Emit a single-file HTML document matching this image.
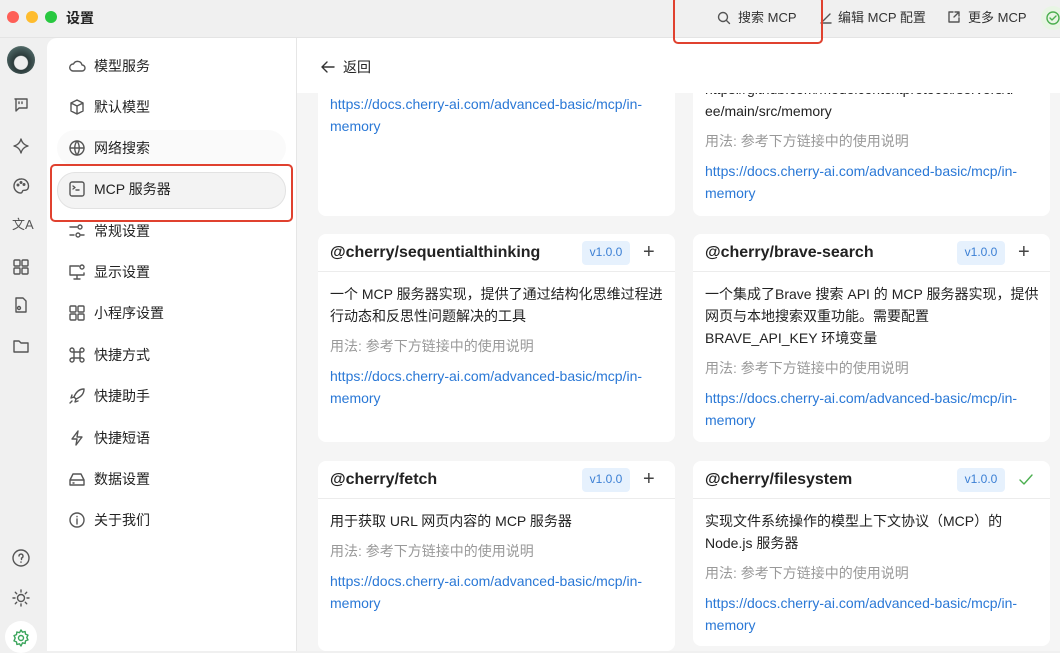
<!DOCTYPE html>
<html><head><meta charset="utf-8"><style>
*{box-sizing:border-box;margin:0;padding:0}
body{width:1060px;height:651px;overflow:hidden;background:#f0f0f0;font-family:"Liberation Sans","Noto Sans CJK SC",sans-serif;color:#222;position:relative;font-size:14px}
.abs{position:absolute}
.dot{position:absolute;top:11px;width:12px;height:12px;border-radius:50%}
svg{position:absolute;fill:none;stroke:#555;stroke-width:1.4;stroke-linecap:round;stroke-linejoin:round}
.side{position:absolute;left:47px;top:38px;width:250px;height:613px;background:#fff;border-top-left-radius:10px;border-right:1px solid #e6e6e6}
.item{position:absolute;left:94px;font-size:14px;line-height:20px;color:#222}
.main{position:absolute;left:297px;top:38px;width:763px;height:613px;background:#f5f5f5}
.hdr{position:absolute;left:297px;top:38px;width:763px;height:55px;background:#fff}
.card{position:absolute;background:#fff;border-radius:8px;width:357px;overflow:hidden}
.ch{height:38px;border-bottom:1px solid #ececec;position:relative}
.ct{position:absolute;left:12px;top:8px;font-size:16px;font-weight:bold;color:#222;line-height:22px}
.ver{position:absolute;left:264px;top:7px;width:48px;height:24px;background:#e6f1fd;border-radius:4px;color:#3b7fd4;font-size:12px;text-align:center;line-height:22px}
.act{position:absolute;left:325px;top:6px;font-size:20px;color:#444;line-height:24px}
.cb{padding:11px 8px 0 12px;line-height:22px;font-size:14px}
.u{color:#999;margin-top:8px}
.l{color:#2a78d6;margin-top:8px}
.red{position:absolute;border:2px solid #e0412f;border-radius:5px}
.tb{position:absolute;top:9px;font-size:13px;color:#333;line-height:18px}
</style></head><body>
<div class="dot" style="left:7px;background:#fe5f57"></div>
<div class="dot" style="left:26px;background:#febc2e"></div>
<div class="dot" style="left:45px;background:#28c840"></div>
<div class="abs" style="left:66px;top:8px;font-weight:bold;font-size:14px;line-height:20px">设置</div>

<div class="tb" style="left:738px">搜索 MCP</div>
<svg style="left:717px;top:11px" width="14" height="14"><circle cx="6" cy="6" r="4.5"/><path d="M9.5 9.5l3 3"/></svg>
<div class="tb" style="left:838px">编辑 MCP 配置</div>
<svg style="left:819px;top:11px" width="14" height="14"><path d="M2 12h10M4 10l7-7"/></svg>
<div class="tb" style="left:968px">更多 MCP</div>
<svg style="left:947px;top:10px" width="14" height="14"><path d="M6 2H2v10h10V8M8 2h4v4M12 2L7 7"/></svg>
<div class="abs" style="left:1041px;top:6px;width:24px;height:24px;border-radius:50%;background:#e8f5e4"></div>
<svg style="left:1045px;top:10px;stroke:#4caf50" width="16" height="16"><circle cx="8" cy="8" r="6"/><path d="M5 8l2 2 4-4"/></svg>

<div class="abs" style="left:7px;top:46px;width:28px;height:28px;border-radius:50%;background:radial-gradient(circle at 50% 60%,#eee 30%,#2b3a3a 34%,#4a6160 70%,#b5c8b5 100%)"></div>
<svg style="left:13px;top:97px" width="16" height="16"><path d="M2 2h12v9H6l-3 3V2z"/><path d="M6 5v1.5M9 5v1.5"/></svg>
<svg style="left:12px;top:137px" width="18" height="18"><path d="M9 2c1 4 3 6 7 7-4 1-6 3-7 7-1-4-3-6-7-7 4-1 6-3 7-7z"/></svg>
<svg style="left:12px;top:177px" width="18" height="18"><path d="M9 2a7 7 0 1 0 0 14c1.5 0 1-2 2-2.5s4 .5 5-2A7 7 0 0 0 9 2z"/><circle cx="6" cy="8" r=".8"/><circle cx="9" cy="5.5" r=".8"/><circle cx="12" cy="7.5" r=".8"/></svg>
<div class="abs" style="left:12px;top:214px;font-size:13px;color:#555">文A</div>
<svg style="left:12px;top:258px" width="18" height="18"><rect x="2" y="2" width="6" height="6" rx="1"/><rect x="10" y="2" width="6" height="6" rx="1"/><rect x="2" y="10" width="6" height="6" rx="1"/><rect x="10" y="10" width="6" height="6" rx="1"/></svg>
<svg style="left:12px;top:296px" width="18" height="18"><path d="M4 2h7l3 3v11H4z"/><circle cx="7" cy="12" r="1.5"/></svg>
<svg style="left:12px;top:337px" width="18" height="18"><path d="M2 4h5l2 2h7v9H2z"/></svg>
<svg style="left:11px;top:548px" width="20" height="20"><circle cx="10" cy="10" r="8"/><path d="M8 8a2 2 0 1 1 2.5 2v1.5M10 14v.3"/></svg>
<svg style="left:11px;top:588px" width="20" height="20"><circle cx="10" cy="10" r="3.5"/><path d="M10 2v2M10 16v2M2 10h2M16 10h2M4.3 4.3l1.4 1.4M14.3 14.3l1.4 1.4M4.3 15.7l1.4-1.4M14.3 5.7l1.4-1.4"/></svg>
<div class="abs" style="left:5px;top:621px;width:32px;height:32px;border-radius:50%;background:#fff"></div>
<svg style="left:11px;top:628px;stroke:#3aa45b" width="20" height="20"><circle cx="10" cy="10" r="2.5"/><path d="M10 2l1.5 2.2 2.6-.7.4 2.6 2.5 1-1.2 2.4 1.2 2.4-2.5 1-.4 2.6-2.6-.7L10 18l-1.5-2.2-2.6.7-.4-2.6-2.5-1L4.2 10 3 7.6l2.5-1 .4-2.6 2.6.7z"/></svg>

<div class="side"></div>
<div class="abs" style="left:57px;top:130px;width:229px;height:36px;border-radius:18px;background:#fafafa"></div>
<div class="abs" style="left:57px;top:172px;width:229px;height:37px;border-radius:18px;background:#f3f3f3;border:1px solid #e2e2e2"></div>
<div class="red" style="left:50px;top:164px;width:243px;height:58px"></div>
<svg style="left:68px;top:58px" width="18" height="16"><path d="M5 13h9a3 3 0 0 0 0-6 4.5 4.5 0 0 0-8.5-1A3.5 3.5 0 0 0 5 13z"/></svg>
<svg style="left:68px;top:98px" width="18" height="18"><path d="M9 2l6 3v8l-6 3-6-3V5zM3 5l6 3 6-3M9 8v8"/></svg>
<svg style="left:68px;top:139px" width="18" height="18"><circle cx="9" cy="9" r="7"/><path d="M2 9h14M9 2c-3 4-3 10 0 14M9 2c3 4 3 10 0 14"/></svg>
<svg style="left:68px;top:180px" width="18" height="18"><rect x="2" y="2" width="14" height="14" rx="2"/><path d="M5 6l2 1.5L5 9M8 10h3"/></svg>
<svg style="left:68px;top:222px" width="18" height="18"><path d="M2 5h7M2 13h4M13 13h3"/><circle cx="12" cy="5" r="2"/><circle cx="10" cy="13" r="2"/></svg>
<svg style="left:68px;top:263px" width="18" height="18"><path d="M11 3H2v9h14v-2M9 12v4M6 16h6"/><circle cx="14" cy="4" r="2"/></svg>
<svg style="left:68px;top:304px" width="18" height="18"><rect x="2" y="2" width="6" height="6" rx="1"/><rect x="10" y="2" width="6" height="6" rx="1"/><rect x="2" y="10" width="6" height="6" rx="1"/><rect x="10" y="10" width="6" height="6" rx="1"/></svg>
<svg style="left:68px;top:346px" width="18" height="18"><path d="M6 6h6v6H6zM6 6H4a2 2 0 1 1 2-2zM12 6V4a2 2 0 1 1 2 2zM12 12h2a2 2 0 1 1-2 2zM6 12v2a2 2 0 1 1-2-2z"/></svg>
<svg style="left:68px;top:387px" width="18" height="18"><path d="M16 2c-5 0-8 3-10 8l2 2c5-2 8-5 8-10zM6 10l-3 1 1-3M8 12l-1 3 3-1M4 14l-2 2"/></svg>
<svg style="left:68px;top:429px" width="18" height="18"><path d="M10 2L4 10h5l-1 6 6-8H9z"/></svg>
<svg style="left:68px;top:470px" width="18" height="18"><path d="M2 10l3-6h8l3 6v5H2zM2 10h14M5 13h1"/></svg>
<svg style="left:68px;top:511px" width="18" height="18"><circle cx="9" cy="9" r="7"/><path d="M9 8v5M9 5.5v.3"/></svg>
<div class="item" style="top:56px">模型服务</div>
<div class="item" style="top:97px">默认模型</div>
<div class="item" style="top:138px">网络搜索</div>
<div class="item" style="top:179px">MCP 服务器</div>
<div class="item" style="top:221px">常规设置</div>
<div class="item" style="top:262px">显示设置</div>
<div class="item" style="top:303px">小程序设置</div>
<div class="item" style="top:345px">快捷方式</div>
<div class="item" style="top:386px">快捷助手</div>
<div class="item" style="top:428px">快捷短语</div>
<div class="item" style="top:469px">数据设置</div>
<div class="item" style="top:510px">关于我们</div>

<div class="main"></div>
<div class="card" style="left:318px;top:60px;height:156px"><div class="cb" style="padding-top:33px"><div class="l" style="margin-top:0">https://docs.cherry-ai.com/advanced-basic/mcp/in-memory</div></div></div>
<div class="card" style="left:693px;top:60px;height:156px"><div class="cb" style="padding-top:18px">https://github.com/modelcontextprotocol/servers/tr<br>ee/main/src/memory<div class="u">用法: 参考下方链接中的使用说明</div><div class="l">https://docs.cherry-ai.com/advanced-basic/mcp/in-memory</div></div></div>

<div class="card" style="left:318px;top:234px;height:208px"><div class="ch"><div class="ct">@cherry/sequentialthinking</div><div class="ver">v1.0.0</div><div class="act">+</div></div><div class="cb">一个 MCP 服务器实现，提供了通过结构化思维过程进行动态和反思性问题解决的工具<div class="u">用法: 参考下方链接中的使用说明</div><div class="l">https://docs.cherry-ai.com/advanced-basic/mcp/in-memory</div></div></div>
<div class="card" style="left:693px;top:234px;height:208px"><div class="ch"><div class="ct">@cherry/brave-search</div><div class="ver">v1.0.0</div><div class="act">+</div></div><div class="cb">一个集成了Brave 搜索 API 的 MCP 服务器实现，提供<br>网页与本地搜索双重功能。需要配置<br>BRAVE_API_KEY 环境变量<div class="u">用法: 参考下方链接中的使用说明</div><div class="l">https://docs.cherry-ai.com/advanced-basic/mcp/in-memory</div></div></div>

<div class="card" style="left:318px;top:461px;height:190px"><div class="ch"><div class="ct">@cherry/fetch</div><div class="ver">v1.0.0</div><div class="act">+</div></div><div class="cb">用于获取 URL 网页内容的 MCP 服务器<div class="u">用法: 参考下方链接中的使用说明</div><div class="l">https://docs.cherry-ai.com/advanced-basic/mcp/in-memory</div></div></div>
<div class="card" style="left:693px;top:461px;height:185px"><div class="ch"><div class="ct">@cherry/filesystem</div><div class="ver">v1.0.0</div><svg style="left:326px;top:12px;stroke:#4caf50" width="14" height="14"><path d="M1 7l4 4 8-9"/></svg></div><div class="cb">实现文件系统操作的模型上下文协议（MCP）的<br>Node.js 服务器<div class="u">用法: 参考下方链接中的使用说明</div><div class="l">https://docs.cherry-ai.com/advanced-basic/mcp/in-memory</div></div></div>

<div class="hdr"></div>
<svg style="left:320px;top:59px;stroke:#333" width="16" height="16"><path d="M14 8H2M7 3L2 8l5 5"/></svg>
<div class="abs" style="left:343px;top:57px;font-size:14px;line-height:20px">返回</div>

<div class="abs" style="left:0;top:0;width:1060px;height:38px;border-bottom:1px solid #e4e4e4;pointer-events:none"></div>
<div class="red" style="left:673px;top:-4px;width:150px;height:48px"></div>
</body></html>
